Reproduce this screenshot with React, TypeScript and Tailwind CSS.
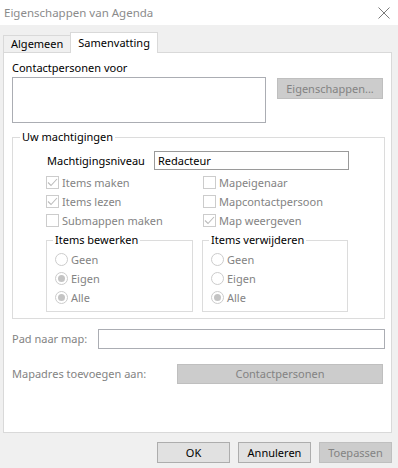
import React from 'react';

const CheckBox = ({ label, checked }: { label: string; checked?: boolean }) => (
  <div className="flex items-center h-[19px]">
    <span className="w-[13px] h-[13px] border border-[#cccccc] bg-white flex items-center justify-center">
      {checked && (
        <svg width="11" height="11" viewBox="0 0 11 11">
          <path d="M1 5.5 L4 8.5 L10 2" fill="none" stroke="#bcbcbc" strokeWidth="1.1" />
        </svg>
      )}
    </span>
    <span className="ml-[3px] text-[#838383]">{label}</span>
  </div>
);

const Radio = ({ label, checked }: { label: string; checked?: boolean }) => (
  <div className="flex items-center h-[19px]">
    <span className="w-[13px] h-[13px] rounded-full border border-[#cccccc] bg-white flex items-center justify-center">
      {checked && <span className="w-[7px] h-[7px] rounded-full bg-[#c4c4c4]" />}
    </span>
    <span className="ml-[3px] text-[#838383]">{label}</span>
  </div>
);

const RadioGroup = ({ title, options, selected, width }: { title: string; options: string[]; selected: string[]; width: string }) => (
  <fieldset className={`border border-[#dcdcdc] ${width}`}>
    <legend className="ml-[6px] px-[2px] text-black leading-[16px]">{title}</legend>
    <div className="pt-[2px] pl-[8px] pb-[4px]">
      {options.map((o) => (
        <Radio key={o} label={o} checked={selected.includes(o)} />
      ))}
    </div>
  </fieldset>
);

export default function App() {
  const opts = ['Geen', 'Eigen', 'Alle'];

  return (
    <div className="w-[398px] h-[468px] bg-[#f0f0f0] flex flex-col text-[11px] leading-[16px] font-['Noto_Sans',sans-serif] text-black overflow-hidden">
      {/* Title bar */}
      <div className="h-[25px] bg-white flex items-center justify-between pl-[4px] pr-[8px] shrink-0">
        <span className="text-[#8b8b8b] text-[11.5px]">Eigenschappen van Agenda</span>
        <svg width="12" height="12" viewBox="0 0 12 12">
          <path d="M0.5 0.5 L11.5 11.5 M11.5 0.5 L0.5 11.5" stroke="#7a7a7a" strokeWidth="1" fill="none" />
        </svg>
      </div>

      {/* Tabs */}
      <div className="pl-[3px] pr-[6px] pt-[7px]">
        <div className="flex items-end">
          <div className="h-[17px] px-[7px] border border-b-0 border-r-0 border-[#d9d9d9] bg-[#f0f0f0] flex items-center">
            Algemeen
          </div>
          <div className="h-[21px] -mb-px relative z-10 px-[7px] border border-b-0 border-[#d9d9d9] bg-white flex items-center">
            Samenvatting
          </div>
        </div>

        <div className="h-[381px] border border-[#d9d9d9] bg-white pt-[7px] pl-[8px] pr-[6px]">
          <div>Contactpersonen voor</div>
          <div className="flex mt-[1px]">
            <div className="w-[254px] h-[46px] border border-[#abadb3] bg-white" />
            <div className="ml-[11px] mt-[1px] w-[106px] h-[21px] bg-[#cccccc] border border-[#bfbfbf] text-[#838383] flex items-center justify-center">
              Eigenschappen...
            </div>
          </div>

          <fieldset className="mt-[6px] border border-[#dcdcdc] w-[373px]">
            <legend className="ml-[7px] px-[2px] leading-[16px]">Uw machtigingen</legend>
            <div className="pl-[33px] pb-[6px]">
              <div className="flex items-center mt-[6px] h-[19px]">
                <span className="pl-[1px] w-[108px]">Machtigingsniveau</span>
                <div className="w-[195px] h-[19px] border border-[#9a9a9a] flex items-center pl-[3px]">Redacteur</div>
              </div>

              <div className="grid grid-cols-[157px_1fr] mt-[3px]">
                <CheckBox label="Items maken" checked />
                <CheckBox label="Mapeigenaar" />
                <CheckBox label="Items lezen" checked />
                <CheckBox label="Mapcontactpersoon" />
                <CheckBox label="Submappen maken" />
                <CheckBox label="Map weergeven" checked />
              </div>

              <div className="flex gap-[9px] mt-[2px]">
                <RadioGroup title="Items bewerken" options={opts} selected={['Eigen', 'Alle']} width="w-[147px]" />
                <RadioGroup title="Items verwijderen" options={opts} selected={['Alle']} width="w-[146px]" />
              </div>
            </div>
          </fieldset>

          <div className="flex items-center mt-[10px]">
            <span className="w-[86px] text-[#838383]">Pad naar map:</span>
            <div className="w-[287px] h-[20px] border border-[#abadb3] bg-white" />
          </div>

          <div className="flex items-center mt-[15px]">
            <span className="w-[165px] text-[#838383]">Mapadres toevoegen aan:</span>
            <div className="w-[206px] h-[20px] bg-[#cccccc] border border-[#bfbfbf] text-[#838383] flex items-center justify-center">
              Contactpersonen
            </div>
          </div>
        </div>
      </div>

      {/* Footer buttons */}
      <div className="flex justify-end gap-[8px] pr-[6px] mt-[9px]">
        <div className="w-[73px] h-[21px] bg-[#e1e1e1] border border-[#adadad] flex items-center justify-center">OK</div>
        <div className="w-[73px] h-[21px] bg-[#e1e1e1] border border-[#adadad] flex items-center justify-center">Annuleren</div>
        <div className="w-[73px] h-[21px] bg-[#cccccc] border border-[#bfbfbf] text-[#838383] flex items-center justify-center">Toepassen</div>
      </div>
    </div>
  );
}
